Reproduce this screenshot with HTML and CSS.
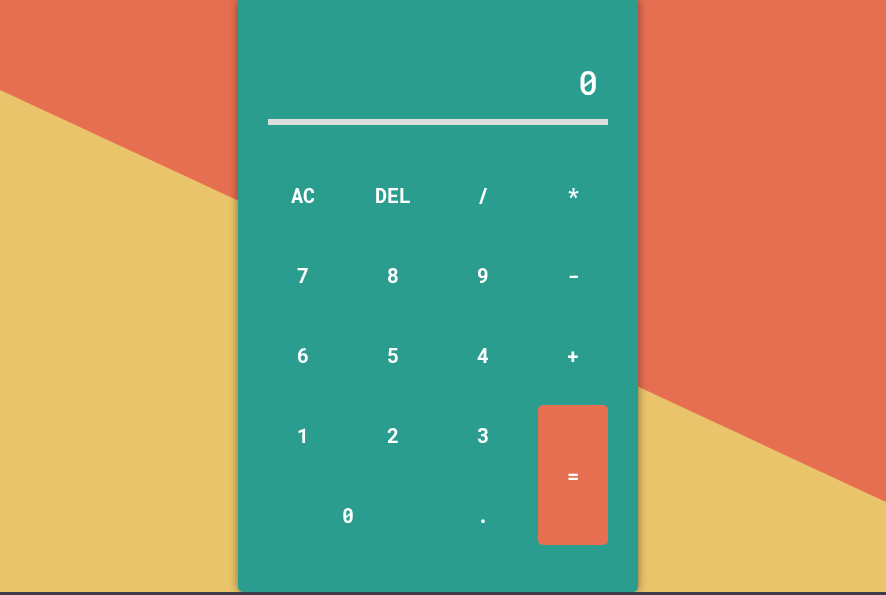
FILE: index.html
```html
<!DOCTYPE html>
<html>
<head>
<meta charset="utf-8">
<link rel="stylesheet" href="styles.css">
</head>
<body>
<div class="page">
  <div class="stage">
    <div class="calc">
      <div class="display">0</div>
      <div class="keys">
        <button class="key">AC</button>
        <button class="key">DEL</button>
        <button class="key">/</button>
        <button class="key">*</button>
        <button class="key">7</button>
        <button class="key">8</button>
        <button class="key">9</button>
        <button class="key">-</button>
        <button class="key">6</button>
        <button class="key">5</button>
        <button class="key">4</button>
        <button class="key">+</button>
        <button class="key">1</button>
        <button class="key">2</button>
        <button class="key">3</button>
        <button class="key key-equals">=</button>
        <button class="key key-zero">0</button>
        <button class="key">.</button>
      </div>
    </div>
  </div>
  <div class="bottom-strip"></div>
</div>
</body>
</html>
```

FILE: styles.css
```css
html, body {
  margin: 0;
  padding: 0;
  height: 100%;
  overflow: hidden;
}
body {
  background: #e9c46a;
  font-family: "Roboto Mono", "DejaVu Sans Mono", "Liberation Mono", monospace;
}
body::before {
  content: "";
  position: fixed;
  inset: 0;
  background: #e76f51;
  clip-path: polygon(0 0, 100% 0, 100% 502px, 0 90px);
  z-index: 0;
}
.page {
  position: relative;
  z-index: 1;
  display: flex;
  flex-direction: column;
  height: 595px;
}
.stage {
  height: 592px;
  display: flex;
  justify-content: center;
  padding-right: 10px;
}
.calc {
  width: 400px;
  height: 592px;
  box-sizing: border-box;
  background: #2a9d8f;
  border-radius: 0 0 5px 5px;
  box-shadow: 0 0 10px rgba(0, 0, 0, 0.45);
  padding: 0 30px;
  display: flex;
  flex-direction: column;
}
.display {
  height: 99px;
  box-sizing: content-box;
  display: flex;
  align-items: flex-end;
  justify-content: flex-end;
  padding: 0 10px 20px 0;
  color: #ffffff;
  font-size: 33px;
  font-weight: 500;
  line-height: 1;
  border-bottom: 6px solid #dddddd;
}
.keys {
  margin-top: 40px;
  display: grid;
  grid-template-columns: repeat(4, 70px);
  grid-template-rows: repeat(5, 60px);
  column-gap: 20px;
  row-gap: 20px;
}
.key {
  border: none;
  background: transparent;
  color: #ffffff;
  font-family: inherit;
  font-size: 20px;
  font-weight: 700;
  padding: 0;
  margin: 0;
  border-radius: 5px;
}
.key-equals {
  grid-column: 4;
  grid-row: 4 / span 2;
  background: #e76f51;
}
.key-zero {
  grid-column: 1 / span 2;
}
.bottom-strip {
  height: 3px;
  background: #3b3c48;
}
```
